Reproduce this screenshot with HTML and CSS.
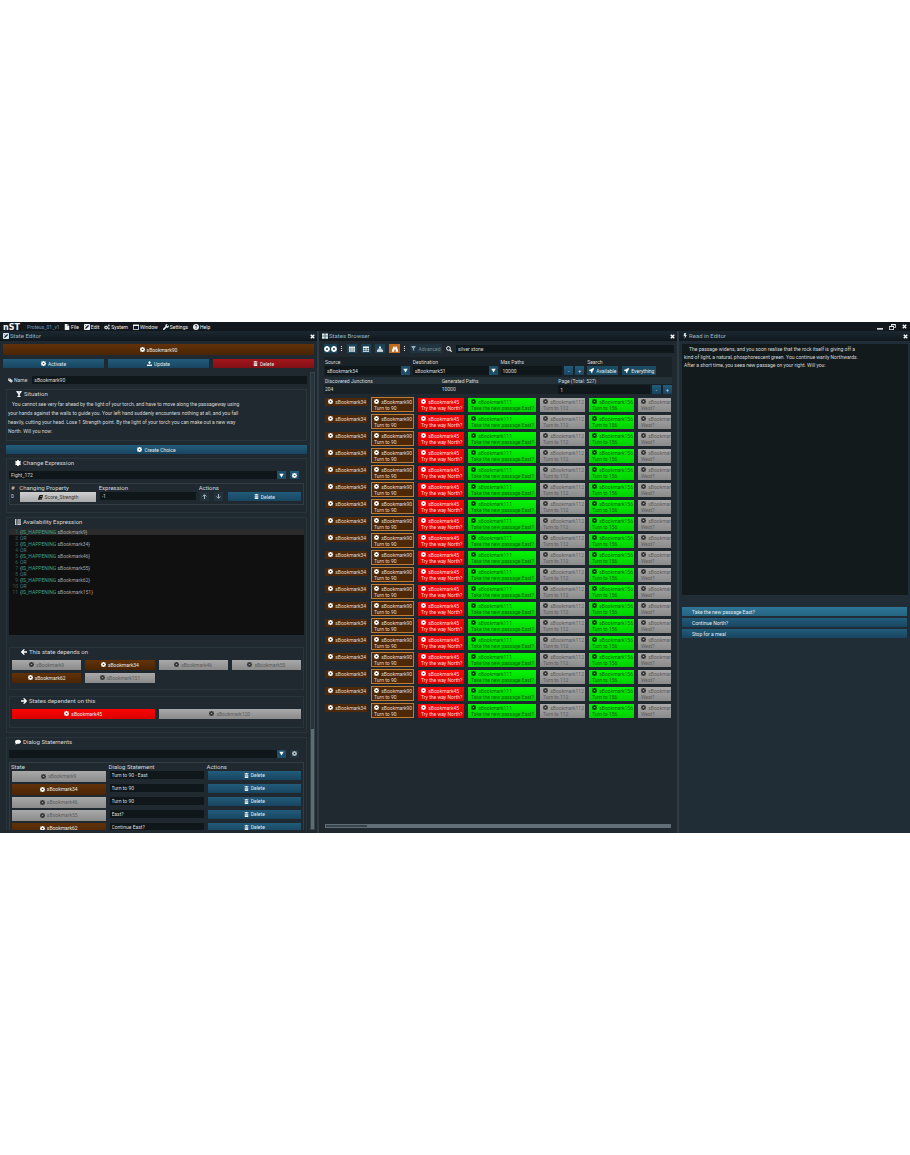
FILE: index.html
```html
<!DOCTYPE html>
<html lang="en">
<head>
<meta charset="utf-8">
<title>Proteus_01_v1</title>
<link rel="stylesheet" href="styles.css">
</head>
<body>
<svg class="sprite" aria-hidden="true">
  <symbol id="gear" viewBox="0 0 16 16"><path fill-rule="evenodd" d="M6 0h4l.4 1.400 1.400.6L13 1.100l2 2-1 1.500.6 1.400 1.400.4v3.200l-1.400.5-.6 1.400.9 1.500-1.900 1.900-1.600-.9-1.400.6L9.800 16H6.200l-.4-1.400-1.400-.6-1.600.9-1.900-2 .9-1.500-.6-1.400L0 9.600V6.400l1.300-.5.6-1.400L1 3l2-1.900 1.500.9 1.200-.6zM8 5.400a2.600 2.600 0 1 0 0 5.200 2.600 2.600 0 0 0 0-5.200z"/></symbol>
  <symbol id="gears" viewBox="0 0 20 16"><path fill-rule="evenodd" d="M6 3h2l.4 1.500 1.300.5 1.300-.7 1.400 1.500-.8 1.200.5 1.300 1.500.5v1.800l-1.500.4-.5 1.300.8 1.300-1.400 1.400-1.300-.8-1.300.5L8 16H6l-.4-1.500-1.300-.5-1.300.8-1.400-1.400.8-1.300-.5-1.300L.3 10.500V8.700L1.800 8.300l.5-1.300-.8-1.300L3 4.300l1.300.7 1.300-.5zM7 7.300a2.300 2.300 0 1 0 0 4.600 2.300 2.300 0 0 0 0-4.600z"/><path fill-rule="evenodd" d="M16 0a3 3 0 1 1 0 6 3 3 0 0 1 0-6zm0 2a1 1 0 1 0 0 2 1 1 0 0 0 0-2zM16 10a3 3 0 1 1 0 6 3 3 0 0 1 0-6zm0 2a1 1 0 1 0 0 2 1 1 0 0 0 0-2z"/></symbol>
  <symbol id="file" viewBox="0 0 16 16"><path d="M2 0h7v5h5v11H2zM10 0l4 4h-4z"/></symbol>
  <symbol id="edit" viewBox="0 0 16 16"><path fill-rule="evenodd" d="M2 0h12q2 0 2 2v12q0 2-2 2H2q-2 0-2-2V2q0-2 2-2zm9 2.500L4 9.500 3 13l3.500-1 7-7zM3 3v3l3-3z"/></symbol>
  <symbol id="window" viewBox="0 0 16 16"><path fill-rule="evenodd" d="M0 1h16v14H0zm2 4v8h12V5z"/></symbol>
  <symbol id="wrench" viewBox="0 0 16 16"><path d="M15.600 3.500 13 6l-2.500-.5L10 3 12.500.4A4.800 4.800 0 0 0 6.500 6.500L.7 12.300a2 2 0 0 0 3 3L9.500 9.500a4.800 4.800 0 0 0 6.100-6z"/></symbol>
  <symbol id="help" viewBox="0 0 16 16"><circle cx="8" cy="8" r="8"/><path d="M5.500 6.200q0-2.500 2.600-2.500t2.500 2.200q0 1.500-2.500 2.600v1.200M8 11.200v2" fill="none" stroke="#12181c" stroke-width="2"/></symbol>
  <symbol id="upload" viewBox="0 0 16 16"><path d="M8 0l5 5.500h-3V10H6V5.500H3zM0 11h5v1.500h6V11h5v5H0z"/></symbol>
  <symbol id="trash" viewBox="0 0 16 16"><path fill-rule="evenodd" d="M1.500 1.500H5L6 0h4l1 1.500h3.500v2h-13zM2.500 4.500h11V16h-11zM5 6.500v7h1v-7zm2.500 0v7h1v-7zm2.500 0v7h1v-7z"/></symbol>
  <symbol id="tag" viewBox="0 0 16 16"><path fill-rule="evenodd" d="M0 1.500h7.500L16 9.500 10 15.500 0 7.500zM3.500 3.500a1.500 1.500 0 1 0 0 3 1.500 1.500 0 0 0 0-3z"/></symbol>
  <symbol id="glass" viewBox="0 0 16 16"><path fill-rule="evenodd" d="M1 0h14v2L10 8.500V13l3 1.500V16H3v-1.500L6 13V8.500L1 2zm4 2 1 1.500h4L11 2z"/></symbol>
  <symbol id="asterisk" viewBox="0 0 16 16"><path d="M8 0v16M1 4l14 8M1 12l14-8" stroke="currentColor" stroke-width="4.500"/></symbol>
  <symbol id="book" viewBox="0 0 16 16"><path fill-rule="evenodd" d="M5 0h11l-3 12H4.500q-1 1.500.5 2h8L12.500 16H3Q-.5 15 .5 11zm2 3.500L6.800 4.500h6l.3-1z"/></symbol>
  <symbol id="list" viewBox="0 0 16 16"><path d="M0 0h2v16H0zM3.500 1H5v3H3.500zm0 5.500H5v3H3.500zm0 5.500H5v3H3.500zM6 1h10v3H6zm0 5.500h10v3H6zM6 12h10v3H6z"/></symbol>
  <symbol id="left" viewBox="0 0 16 16"><path d="M9 1 2 8l7 7M2.500 8H16" fill="none" stroke="currentColor" stroke-width="3.500"/></symbol>
  <symbol id="right" viewBox="0 0 16 16"><path d="m7 1 7 7-7 7M13.500 8H0" fill="none" stroke="currentColor" stroke-width="3.500"/></symbol>
  <symbol id="up" viewBox="0 0 16 16"><path d="m2 8 6-6 6 6M8 3v13" fill="none" stroke="currentColor" stroke-width="3"/></symbol>
  <symbol id="down" viewBox="0 0 16 16"><path d="m2 8 6 6 6-6M8 13V0" fill="none" stroke="currentColor" stroke-width="3"/></symbol>
  <symbol id="comment" viewBox="0 0 18 16"><path d="M9 1c5 0 9 2.700 9 6s-4 6.500-9 6.500q-1.500 0-3-.4Q4 15.500.5 15.500 2.500 13.500 2 11.500 0 9.500 0 7c0-3.300 4-6 9-6z"/></symbol>
  <symbol id="tiles" viewBox="0 0 16 16"><path d="M0 1h7.300v6.300H0zm8.700 0H16v6.300H8.700zM0 8.700h7.300V15H0zm8.700 0H16V15H8.700z"/></symbol>
  <symbol id="grid" viewBox="0 0 16 16"><path d="M0 1h4.600v4H0zm5.700 0h4.600v4H5.700zm5.700 0H16v4h-4.600zM0 6h4.600v4H0zm5.700 0h4.600v4H5.700zm5.700 0H16v4h-4.600zM0 11h4.600v4H0zm5.700 0h4.600v4H5.700zm5.700 0H16v4h-4.600z"/></symbol>
  <symbol id="table" viewBox="0 0 16 16"><path fill-rule="evenodd" d="M0 1h16v14H0zm1.500 4.500V8H5V5.500zm5 0V8h3V5.500zm4.500 0V8h3.500V5.500zM1.500 9.500V13H5V9.500zm5 0V13h3V9.500zm4.500 0V13h3.500V9.500z"/></symbol>
  <symbol id="sitemap" viewBox="0 0 16 16"><path d="M5.500 1h5v5H9v1.500h5V11h2v4h-5v-4h1.500V9H9v2h1.500v4h-5v-4H7V9H3.500v2H5v4H0v-4h2V7.500h5V6H5.500z"/></symbol>
  <symbol id="binoculars" viewBox="0 0 16 16"><path d="M3 1h3.500v3h3V1H13v3l3 7v4h-6V9H6v6H0v-4l3-7z"/></symbol>
  <symbol id="filter" viewBox="0 0 16 16"><path d="M1 0h14v2l-5 6v8l-4-3V8L1 2z"/></symbol>
  <symbol id="search" viewBox="0 0 16 16"><circle cx="6.500" cy="6.500" r="5" fill="none" stroke="currentColor" stroke-width="2.600"/><path d="m10 10 5 5" stroke="currentColor" stroke-width="3"/></symbol>
  <symbol id="rocket" viewBox="0 0 16 16"><path d="M16 0q0 7-5 10v4l-4 2-.5-4L4 9.500 0 9l2-4h4q3-5 10-5z"/></symbol>
  <symbol id="bolt" viewBox="0 0 16 16"><path d="M6 0h5L9.500 5H13L6.500 16 8 8.500H4z"/></symbol>
  <symbol id="close" viewBox="0 0 16 16"><path d="m2.500 2.500 11 11m0-11-11 11" stroke="currentColor" stroke-width="4.500"/></symbol>
  <symbol id="caret" viewBox="0 0 16 16"><path d="M1 2h14L8 14z"/></symbol>
  <symbol id="minimize" viewBox="0 0 16 16"><path d="M0 11h16v4H0z"/></symbol>
  <symbol id="restore" viewBox="0 0 18 16"><path fill-rule="evenodd" d="M5 0h13v10h-5v6H0V5h5zm2 3v2h6v3h3V3zM2 8v6h9V8z"/></symbol>
</svg>

<main class="app">
  <header class="menubar">
    <span class="logo">nST</span>
    <span class="project">Proteus_01_v1</span>
    <nav class="menus">
      <button class="menu"><svg class="icon"><use href="#file"/></svg>File</button>
      <button class="menu"><svg class="icon"><use href="#edit"/></svg>Edit</button>
      <button class="menu"><svg class="icon"><use href="#gears"/></svg>System</button>
      <button class="menu"><svg class="icon"><use href="#window"/></svg>Window</button>
      <button class="menu"><svg class="icon"><use href="#wrench"/></svg>Settings</button>
      <button class="menu"><svg class="icon"><use href="#help"/></svg>Help</button>
    </nav>
    <div class="window-controls">
      <button class="menu" aria-label="Minimize"><svg class="icon"><use href="#minimize"/></svg></button>
      <button class="menu" aria-label="Restore"><svg class="icon large"><use href="#restore"/></svg></button>
      <button class="menu" aria-label="Close"><svg class="icon small"><use href="#close"/></svg></button>
    </div>
  </header>

  <div class="panes">
    <section class="pane editor-pane">
      <header class="pane-title"><svg class="icon"><use href="#edit"/></svg><h1>State Editor</h1><button class="pane-close" aria-label="Close State Editor"><svg class="icon"><use href="#close"/></svg></button></header>
      <div class="editor-head">
        <button class="btn brown tall"><svg class="icon"><use href="#gear"/></svg>sBookmark90</button>
        <div class="three">
          <button class="btn"><svg class="icon"><use href="#gear"/></svg>Activate</button>
          <button class="btn"><svg class="icon"><use href="#upload"/></svg>Update</button>
          <button class="btn crimson"><svg class="icon"><use href="#trash"/></svg>Delete</button>
        </div>
      </div>
      <div class="scroll-row">
        <div class="scroll-view">
          <div class="name-row">
            <label for="name"><svg class="icon"><use href="#tag"/></svg>Name</label>
            <input class="field" id="name" value="sBookmark90">
          </div>

          <section class="group situation">
            <h2><svg class="icon"><use href="#glass"/></svg>Situation</h2>
            <p class="story">You cannot see very far ahead by the light of your torch, and have to move along the passageway using<br>your hands against the walls to guide you. Your left hand suddenly encounters nothing at all, and you fall<br>heavily, cutting your head. Lose 1 Strength point. By the light of your torch you can make out a new way<br>North. Will you now:</p>
          </section>

          <button class="btn create"><svg class="icon"><use href="#gear"/></svg>Create Choice</button>

          <section class="group change">
            <h2><svg class="icon"><use href="#asterisk"/></svg>Change Expression</h2>
            <div class="picker">
              <div class="combo"><select class="field" aria-label="Change expression"><option>Fight_172</option></select><span class="arrow"><svg class="icon"><use href="#caret"/></svg></span></div>
              <button class="btn square" aria-label="Expression options"><svg class="icon"><use href="#gear"/></svg></button>
            </div>
            <table class="changes">
              <colgroup><col class="c-num"><col class="c-prop"><col class="c-expr"><col></colgroup>
              <thead><tr><th>#</th><th>Changing Property</th><th>Expression</th><th>Actions</th></tr></thead>
              <tbody><tr>
                <td>0</td>
                <td><button class="btn light"><svg class="icon"><use href="#book"/></svg>Score_Strength</button></td>
                <td><input class="field" aria-label="Expression" value="-1"></td>
                <td><div class="actions">
                  <button class="btn square faint" aria-label="Move up"><svg class="icon"><use href="#up"/></svg></button>
                  <button class="btn square faint" aria-label="Move down"><svg class="icon"><use href="#down"/></svg></button>
                  <button class="btn grow"><svg class="icon"><use href="#trash"/></svg>Delete</button>
                </div></td>
              </tr></tbody>
            </table>
          </section>

          <section class="group availability">
            <h2><svg class="icon"><use href="#list"/></svg>Availability Expression</h2>
            <div class="code">
              <ol class="code-lines" id="code-lines"></ol>
            </div>
            <section class="group depends">
              <h2><svg class="icon"><use href="#left"/></svg>This state depends on</h2>
              <div class="four">
                <button class="btn grey"><svg class="icon"><use href="#gear"/></svg>sBookmark9</button>
                <button class="btn brown"><svg class="icon"><use href="#gear"/></svg>sBookmark34</button>
                <button class="btn grey"><svg class="icon"><use href="#gear"/></svg>sBookmark46</button>
                <button class="btn grey"><svg class="icon"><use href="#gear"/></svg>sBookmark55</button>
                <button class="btn brown"><svg class="icon"><use href="#gear"/></svg>sBookmark62</button>
                <button class="btn grey"><svg class="icon"><use href="#gear"/></svg>sBookmark151</button>
              </div>
            </section>
            <section class="group dependent">
              <h2><svg class="icon"><use href="#right"/></svg>States dependent on this</h2>
              <div class="two">
                <button class="btn red"><svg class="icon"><use href="#gear"/></svg>sBookmark45</button>
                <button class="btn grey"><svg class="icon"><use href="#gear"/></svg>sBookmark120</button>
              </div>
            </section>
          </section>

          <section class="group dialog">
            <h2><svg class="icon"><use href="#comment"/></svg>Dialog Statements</h2>
            <div class="picker">
              <div class="combo"><select class="field" aria-label="Dialog state"><option></option></select><span class="arrow"><svg class="icon"><use href="#caret"/></svg></span></div>
              <button class="btn square faint" aria-label="Dialog options"><svg class="icon"><use href="#gear"/></svg></button>
            </div>
            <table class="dialogs">
              <thead><tr><th>State</th><th>Dialog Statement</th><th>Actions</th></tr></thead>
              <tbody id="dialog-rows"></tbody>
            </table>
          </section>
        </div>
        <div class="vbar"><div class="vthumb"></div></div>
      </div>
    </section>

    <section class="pane browser-pane">
      <header class="pane-title"><svg class="icon"><use href="#tiles"/></svg><h1>States Browser</h1><button class="pane-close" aria-label="Close States Browser"><svg class="icon"><use href="#close"/></svg></button></header>
      <div class="toolbar">
        <button class="btn tool pair" aria-label="States"><svg class="icon"><use href="#gear"/></svg><svg class="icon"><use href="#gear"/></svg></button>
        <span class="dots"></span>
        <button class="btn tool" aria-label="Grid"><svg class="icon"><use href="#grid"/></svg></button>
        <button class="btn tool" aria-label="Table"><svg class="icon"><use href="#table"/></svg></button>
        <button class="btn tool" aria-label="Graph"><svg class="icon"><use href="#sitemap"/></svg></button>
        <button class="btn tool orange" aria-label="Explore"><svg class="icon"><use href="#binoculars"/></svg></button>
        <span class="dots"></span>
        <button class="btn advanced"><svg class="icon"><use href="#filter"/></svg>Advanced</button>
        <label class="search" for="search" aria-label="Search states"><svg class="icon"><use href="#search"/></svg></label>
        <input class="field" id="search" value="silver stone">
      </div>
      <div class="query">
        <div class="q-source"><label for="source">Source</label>
          <div class="combo"><select class="field" id="source"><option>sBookmark34</option></select><span class="arrow"><svg class="icon"><use href="#caret"/></svg></span></div></div>
        <div class="q-source"><label for="dest">Destination</label>
          <div class="combo"><select class="field" id="dest"><option>sBookmark51</option></select><span class="arrow"><svg class="icon"><use href="#caret"/></svg></span></div></div>
        <div class="q-max"><label for="max">Max Paths</label>
          <div class="stepper"><input class="field" id="max" value="10000"><button class="btn">-</button><button class="btn">+</button></div></div>
        <div class="q-search"><span>Search</span>
          <div class="stepper"><button class="btn go"><svg class="icon"><use href="#rocket"/></svg>Available</button><button class="btn go"><svg class="icon"><use href="#rocket"/></svg>Everything</button></div></div>
      </div>
      <div class="stats">
        <div><span class="stat-label">Discovered Junctions</span><span>204</span></div>
        <div><span class="stat-label">Generated Paths</span><span>10000</span></div>
        <div><label class="stat-label" for="page">Page (Total: 527)</label>
          <div class="stepper"><input class="field" id="page" value="1"><button class="btn">-</button><button class="btn">+</button></div></div>
      </div>
      <div class="paths" id="paths"></div>
      <div class="hbar"><div class="hthumb"></div></div>
    </section>

    <section class="pane reader-pane">
      <header class="pane-title"><svg class="icon"><use href="#bolt"/></svg><h1>Read in Editor</h1><button class="pane-close" aria-label="Close Read in Editor"><svg class="icon"><use href="#close"/></svg></button></header>
      <p class="passage">The passage widens, and you soon realise that the rock itself is giving off a<br>kind of light, a natural, phosphorescent green. You continue warily Northwards.<br>After a short time, you seea new passage on your right. Will you:</p>
      <div class="choices">
        <button class="btn choice hot">Take the new passage East?</button>
        <button class="btn choice">Continue North?</button>
        <button class="btn choice">Stop for a meal</button>
      </div>
    </section>
  </div>
</main>
<script src="app.js"></script>
</body>
</html>
```

FILE: styles.css
```css
* { box-sizing: border-box; }

body {
  margin: 0;
  min-height: 100vh;
  display: flex;
  align-items: center;
  background: #fff;
  color: #d3d8da;
  font: 5px/8px Roboto, "Noto Sans", sans-serif;
}

button, input, select { font: inherit; color: inherit; margin: 0; border: 0; border-radius: 0; }
button { cursor: pointer; }
h1, h2, p, ol { margin: 0; padding: 0; font-weight: 400; }
label { display: block; }

.sprite { position: absolute; width: 0; height: 0; }
.icon { width: 5px; height: 5px; flex: none; fill: currentColor; color: inherit; }

.app {
  width: 100%;
  aspect-ratio: 910 / 511;
  display: flex;
  flex-direction: column;
  background: #20292f;
  overflow: hidden;
}

/* menu bar */
.menubar { display: flex; align-items: center; height: 9px; padding: 0 3px 0 3px; background: #11171b; flex: none; }
.logo { width: 24px; padding-top: 2px; font: bold 8px/8px "DejaVu Sans", sans-serif; color: #f2f2f2; }
.project { width: 37px; color: #6f9cb8; }
.menus { display: flex; gap: 5px; }
.menu { display: flex; align-items: center; gap: 1px; padding: 0; background: none; color: #eef1f2; }
.menu .icon { width: 6px; height: 6px; }
.menu .icon.large { width: 7px; }
.menu .icon.small { width: 5px; height: 5px; }
.window-controls { display: flex; gap: 6px; margin-left: auto; }

/* panes */
.panes { flex: 1; min-height: 0; display: grid; grid-template-columns: minmax(0, 319fr) minmax(0, 360fr) minmax(0, 231fr); }
.pane { display: flex; flex-direction: column; min-height: 0; border-right: 2px solid #2e3b44; }
.editor-pane { padding-bottom: 3px; }
.browser-pane { padding-bottom: 5px; }
.reader-pane { background: #202c36; border-right: 0; }
.pane-title { display: flex; align-items: center; gap: 1px; height: 10px; padding: 0 2px 0 3px; background: linear-gradient(#1b2730, #10181d); color: #8fb6c8; flex: none; }
.pane-title h1 { font-size: 6px; }
.pane-title .icon { width: 6px; height: 6px; color: #d5e8f0; }
.pane-close { margin-left: auto; padding: 0; background: none; display: flex; }
.pane-title .pane-close .icon { width: 5px; height: 5px; color: #fff; }

/* controls */
.btn {
  display: flex;
  align-items: center;
  justify-content: center;
  gap: 2px;
  min-width: 0;
  height: 9px;
  padding: 0 2px;
  background: linear-gradient(#225c7b, #184560);
  color: #e2eaee;
  white-space: nowrap;
}
.btn .icon { color: #fff; }
.btn.brown { background: linear-gradient(#613209, #4a2505); }
.btn.crimson { background: linear-gradient(#a3161b, #811015); }
.btn.red { background: linear-gradient(#fb0404, #da0000); }
.btn.grey { background: linear-gradient(#a9a9a9, #8b8b8b); color: #5c5c5c; }
.btn.grey .icon { color: #333; }
.btn.light { background: linear-gradient(#d0d0d0, #a9a9a9); color: #333; }
.btn.light .icon { color: #111; }
.btn.square { width: 9px; padding: 0; flex: none; }
.btn.faint { background: #22333d; }
.btn.faint .icon { color: #b4bfc4; }
.btn.grow { flex: 1; }

.field { display: block; width: 100%; min-width: 0; height: 8px; padding: 0 2px; background: #10171a; outline: 0; }
select.field { appearance: none; }
.combo { display: flex; flex: 1; min-width: 0; }
.arrow { display: flex; align-items: center; justify-content: center; width: 9px; flex: none; background: #1d4f6b; color: #fff; pointer-events: none; }

/* state editor */
.editor-head { padding: 3px 3px 0; }
.btn.tall { width: 100%; height: 11px; }
.three { display: grid; grid-template-columns: repeat(3, 1fr); gap: 4px; margin-top: 4px; }
.scroll-row { flex: 1; min-height: 0; display: flex; margin-top: 4px; padding: 0 2px 0 6px; }
.scroll-view { flex: 1; min-width: 0; overflow: hidden; padding-right: 3px; }
.vbar { display: flex; flex-direction: column; justify-content: flex-end; width: 5px; border: 1px solid #36434b; background: #28343b; }
.vthumb { height: 22%; background: #5d6c75; }

.name-row { display: flex; margin-top: 4px; gap: 5px; }
.name-row label { display: flex; align-items: center; gap: 1px; padding-left: 2px; }

.group { border: 1px solid #29353c; }
.group h2 { display: flex; align-items: center; gap: 2px; height: 8px; padding-left: 9px; font-size: 6px; }
.group h2 .icon { width: 6px; height: 6px; color: #fff; }
.situation { margin-top: 5px; padding-bottom: 4px; }
.story { margin-top: 2px; padding-left: 1px; line-height: 9px; text-indent: 4px; white-space: nowrap; }
.create { width: 100%; margin-top: 4px; }
.change { margin-top: 4px; padding: 0 2px 7px; }
.change h2, .availability > h2, .dialog h2 { padding-left: 6px; }
.picker { display: flex; gap: 4px; margin-top: 4px; padding-right: 5px; }
.picker .btn { height: 8px; }

table { width: 100%; table-layout: fixed; border-collapse: collapse; border: 1px solid #313c43; }
th, td { padding: 0 2px; text-align: left; vertical-align: top; font-weight: 400; }
th { height: 8px; padding: 0 1px; font-size: 6px; line-height: 8px; }
td .btn { width: 100%; }
.changes { margin-top: 4px; }
.changes .c-num { width: 3%; }
.changes .c-prop { width: 27%; }
.changes .c-expr { width: 34%; }
.changes td { height: 12px; }
.changes td:first-child { padding: 0 1px; }
.changes .light { height: 10px; }
.actions { display: flex; gap: 5px; }

.availability { margin-top: 4px; padding: 0 2px 4px; }
.code { height: 106px; margin-top: 3px; background: #101010; }
.code-lines { display: grid; grid-template-rows: repeat(11, 1fr); height: 63px; list-style: none; line-height: 6px; color: #a3a3a3; }
.code-lines li { display: flex; gap: 2px; }
.code-lines li:first-child { background: #2b2b2b; }
.code-lines .num { width: 9px; text-align: right; color: #2f6257; }
.code-lines .fn { color: #3fa580; }
.code-lines .op { color: #467c96; }
.depends { margin-top: 12px; padding: 0 2px 6px; }
.dependent { margin-top: 6px; padding: 0 2px 8px; }
.four { display: grid; grid-template-columns: repeat(4, 1fr); gap: 3px 4px; margin-top: 4px; }
.two { display: grid; grid-template-columns: repeat(2, 1fr); gap: 4px; margin-top: 4px; }
.four .btn, .two .btn { height: 10px; }

.dialog { margin-top: 4px; padding: 0 2px; }
.dialogs { margin-top: 4px; }
.dialogs td { height: 13px; }
.dialogs td:first-child .btn { height: 11px; }

/* states browser */
.toolbar { display: flex; align-items: center; gap: 4px; padding: 3px 3px 0 5px; }
.btn.tool { width: 10px; flex: none; padding: 0; background: #1b4358; }
.btn.tool .icon { width: 6px; height: 6px; }
.btn.tool.pair { width: 13px; gap: 1px; }
.btn.tool.orange { width: 11px; background: #c06a1e; }
.dots { width: 2px; height: 5px; flex: none; border-left: 1px dotted #dfe5e8; }
.btn.advanced { width: 32px; flex: none; background: #20343f; color: #6f8b99; }
.btn.advanced .icon { color: #8fb0bf; }
.search { display: flex; color: #fff; }
.search .icon { width: 6px; height: 6px; }

.query { display: flex; gap: 3px; margin: 4px 5px 0; padding: 1px 1px 2px; background: #192227; }
.query .field, .stats .field { height: 9px; }
.q-source { flex: 85; min-width: 0; }
.q-max { flex: 84; min-width: 0; }
.q-search { flex: 84; }
.stepper { display: flex; gap: 2px; }
.stepper .btn { width: 9px; flex: none; }
.stepper .btn.go { width: auto; padding: 0 2px; background: #1b4a63; }
.stepper .btn.go + .btn.go { margin-left: 2px; }

.stats { display: grid; grid-template-columns: 117fr 117fr 114fr; margin: 0 5px; padding-left: 1px; background: linear-gradient(#243037 7px, #182126 7px); }
.stats span { display: block; }

.paths { flex: 1; min-height: 0; display: flex; flex-direction: column; gap: 2px; margin: 3px 6px 0; overflow: hidden; }
.path { display: grid; grid-template-columns: 42px 43px 46px 68px 45px 45px 46px; gap: 4px; height: 15px; flex: none; align-items: start; }
.node { display: block; height: 14px; margin-top: 1px; padding: 0 3px; text-align: left; line-height: 6px; overflow: hidden; white-space: nowrap; background: #4d2909; color: #e0d8d0; }
.node .icon { color: #fff; vertical-align: top; margin-right: 1px; }
.node.start { height: 8px; }
.node.current { height: 15px; margin-top: 0; border: 1px solid #c37b32; padding: 0 2px; }
.node.hit { background: linear-gradient(#fb0808, #d60000); color: #ffdada; }
.node.open { background: linear-gradient(#05f505, #02cf02); color: #0b610b; }
.node.open .icon { color: #083808; }
.node.shut { background: linear-gradient(#a9a9a9, #8b8b8b); color: #5c5c5c; }
.node.shut .icon { color: #333; }
.hbar { height: 4px; margin: 0 6px; background: #5f6e77; padding: 1px; }
.hthumb { width: 12%; height: 2px; background: #37434b; }

/* reader */
.passage { height: 251px; margin: 3px 2px 0 3px; padding: 1px 2px; background: #131a1c; text-indent: 5px; white-space: nowrap; }
.choices { display: flex; flex-direction: column; gap: 2px; margin: 12px 3px 0; }
.btn.choice { justify-content: flex-start; padding: 0 10px; }
.btn.choice.hot { background: linear-gradient(#2e7696, #256382); }
```

FILE: app.js
```javascript
const icon = (name) => `<svg class="icon"><use href="#${name}"/></svg>`;

const nodes = [
  ["start", "sBookmark34", ""],
  ["current", "sBookmark90", "Turn to 90"],
  ["hit", "sBookmark45", "Try the way North?"],
  ["open", "sBookmark111", "Take the new passage East?"],
  ["shut", "sBookmark112", "Turn to 112"],
  ["open", "sBookmark156", "Turn to 156"],
  ["shut", "sBookmark", "West?"],
];
const path = nodes
  .map(([kind, name, text]) => `<button class="node ${kind}">${icon("gear")} ${name}${text ? "<br>" + text : ""}</button>`)
  .join("");
document.getElementById("paths").innerHTML = `<div class="path">${path}</div>`.repeat(19);

const states = ["9", "34", "46", "55", "62", "151"];
const lines = [];
states.forEach((id, i) => {
  if (i) lines.push('<span class="op">OR</span>');
  lines.push(`<span>{<span class="fn">IS_HAPPENING</span> sBookmark${id}}</span>`);
});
document.getElementById("code-lines").innerHTML = lines
  .map((line, i) => `<li><span class="num">${i + 1}</span>${line}</li>`)
  .join("");

const dialogs = [
  ["grey", "sBookmark9", "Turn to 90 - East"],
  ["brown", "sBookmark34", "Turn to 90"],
  ["grey", "sBookmark46", "Turn to 90"],
  ["grey", "sBookmark55", "East?"],
  ["brown", "sBookmark62", "Continue East?"],
];
document.getElementById("dialog-rows").innerHTML = dialogs
  .map(([kind, name, text]) => `<tr>
    <td><button class="btn ${kind}">${icon("gear")}${name}</button></td>
    <td><input class="field" aria-label="Statement for ${name}" value="${text}"></td>
    <td><button class="btn">${icon("trash")}Delete</button></td>
  </tr>`)
  .join("");
```
